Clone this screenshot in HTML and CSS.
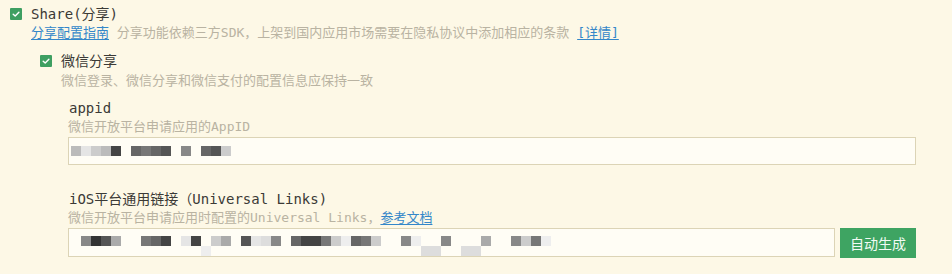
FILE: index.html
```html
<!DOCTYPE html>
<html lang="zh-CN">
<head>
<meta charset="utf-8">
<title>Share</title>
<link rel="stylesheet" href="styles.css">
</head>
<body>
<div class="panel">
  <div class="check-row top">
    <span class="checkbox"><svg viewBox="0 0 12 12" width="12" height="12"><path d="M3.2 6.2 L5.2 8.1 L8.9 4.2" fill="none" stroke="#fff" stroke-width="1.4" stroke-linecap="round" stroke-linejoin="round"/></svg></span>
    <span class="title">Share(分享)</span>
  </div>
  <div class="desc indent"><a class="link" href="#">分享配置指南</a> 分享功能依赖三方SDK，上架到国内应用市场需要在隐私协议中添加相应的条款 <a class="link" href="#">[详情]</a></div>

  <div class="sub">
    <div class="check-row">
      <span class="checkbox"><svg viewBox="0 0 12 12" width="12" height="12"><path d="M3.2 6.2 L5.2 8.1 L8.9 4.2" fill="none" stroke="#fff" stroke-width="1.4" stroke-linecap="round" stroke-linejoin="round"/></svg></span>
      <span class="title">微信分享</span>
    </div>
    <div class="desc indent">微信登录、微信分享和微信支付的配置信息应保持一致</div>

    <div class="field">
      <div class="label">appid</div>
      <div class="desc">微信开放平台申请应用的AppID</div>
      <div class="input first">
        <div class="mosaic">
          <div class="mrow">
            <i class="c b"></i><i class="c e5"></i><i class="c cc"></i><i class="c b"></i><i class="c d4"></i><i class="c"></i><i class="c d6"></i><i class="c d7"></i><i class="c d6"></i><i class="c d5"></i><i class="c"></i><i class="c d8"></i><i class="c"></i><i class="c d6"></i><i class="c d5"></i><i class="c cc"></i>
          </div>
        </div>
      </div>
    </div>

    <div class="field second">
      <div class="label">iOS平台通用链接（Universal Links)</div>
      <div class="desc">微信开放平台申请应用时配置的Universal Links，<a class="link" href="#">参考文档</a></div>
      <div class="input-row">
        <div class="input grow">
          <div class="mosaic wide">
            <div class="mrow">
              <i class="c d8"></i><i class="c d3"></i><i class="c d5"></i><i class="c a"></i><i class="c"></i><i class="c"></i><i class="c d7"></i><i class="c d6"></i><i class="c d4"></i><i class="c"></i><i class="c e5"></i><i class="c d4"></i><i class="c"></i><i class="c cc"></i><i class="c a"></i><i class="c"></i><i class="c d5"></i><i class="c e5"></i><i class="c dd"></i><i class="c d8"></i><i class="c"></i><i class="c d6"></i><i class="c d4"></i><i class="c d4"></i><i class="c d7"></i><i class="c cc"></i><i class="c ee"></i><i class="c d6"></i><i class="c d7"></i><i class="c cc"></i><i class="c"></i><i class="c"></i><i class="c d8"></i><i class="c ee"></i><i class="c"></i><i class="c"></i><i class="c d8"></i><i class="c"></i><i class="c"></i><i class="c"></i><i class="c a"></i><i class="c"></i><i class="c"></i><i class="c d8"></i><i class="c cc"></i><i class="c d7"></i><i class="c ee"></i>
            </div>
            <div class="mrow">
              <i class="c"></i><i class="c"></i><i class="c"></i><i class="c"></i><i class="c"></i><i class="c"></i><i class="c"></i><i class="c"></i><i class="c"></i><i class="c"></i><i class="c"></i><i class="c"></i><i class="c ee"></i><i class="c"></i><i class="c"></i><i class="c"></i><i class="c"></i><i class="c"></i><i class="c"></i><i class="c"></i><i class="c"></i><i class="c"></i><i class="c"></i><i class="c"></i><i class="c"></i><i class="c"></i><i class="c"></i><i class="c"></i><i class="c"></i><i class="c"></i><i class="c"></i><i class="c"></i><i class="c"></i><i class="c"></i><i class="c dd"></i><i class="c dd"></i><i class="c"></i><i class="c"></i><i class="c dd"></i><i class="c dd"></i>
            </div>
          </div>
        </div>
        <button class="btn" type="button">自动生成</button>
      </div>
    </div>
  </div>
</div>
</body>
</html>
```
FILE: styles.css
```css
* { box-sizing: border-box; }
html, body {
  margin: 0;
  padding: 0;
  background: #fdf8e6;
}
body {
  font-family: "DejaVu Sans Mono", "Noto Sans CJK SC", monospace;
  color: #3b3a36;
  width: 952px;
  height: 274px;
  overflow: hidden;
}
.panel {
  padding: 4px 0 0 10px;
}
.check-row {
  display: flex;
  align-items: center;
  gap: 9px;
  height: 20px;
}
.checkbox {
  width: 12px;
  height: 12px;
  background: #3e9f61;
  border-radius: 1px;
  display: flex;
}
.checkbox svg { display: block; }
.title {
  font-size: 14px;
  line-height: 20px;
  color: #3b3a36;
}
.desc {
  font-size: 13px;
  line-height: 18px;
  color: #b9b3a2;
  white-space: nowrap;
}
.indent {
  padding-left: 21px;
}
.link {
  color: #3487c9;
  text-decoration: underline;
  text-underline-offset: 2px;
}
.sub {
  margin-left: 30px;
  margin-top: 9px;
}
.sub > .desc {
  margin-top: 1px;
}
.field {
  padding-left: 28px;
  margin-top: 8px;
}
.field.second {
  margin-top: 24px;
}
.label {
  font-size: 14px;
  line-height: 20px;
  color: #3b3a36;
  padding-left: 1px;
}
.input {
  margin-top: 1px;
  height: 28px;
  width: 848px;
  background: #fffdf5;
  border: 1px solid #dcd4b6;
}
.input.first .mosaic {
  padding: 8px 0 0 2px;
}
.input-row {
  display: flex;
  gap: 5px;
  margin-top: 1px;
  width: 848px;
}
.input.grow {
  margin-top: 0;
  flex: 1;
  height: 29px;
}
.mosaic.wide {
  padding: 7px 0 0 12px;
}
.mrow {
  display: flex;
}
.c {
  display: block;
  width: 10px;
  height: 10px;
}
.d3 { background: #333; }
.d4 { background: #444; }
.d5 { background: #555; }
.d6 { background: #666; }
.d7 { background: #777; }
.d8 { background: #888; }
.a { background: #aaa; }
.b { background: #bbb; }
.cc { background: #ccc; }
.dd { background: #ddd; }
.e5 { background: #e5e5e5; }
.ee { background: #eee; }
.btn {
  width: 76px;
  height: 30px;
  border: none;
  border-radius: 0;
  background: #3ea462;
  color: #f2fbf4;
  font-family: "Noto Sans CJK SC", sans-serif;
  font-size: 14px;
  padding: 0;
  cursor: pointer;
}
```
